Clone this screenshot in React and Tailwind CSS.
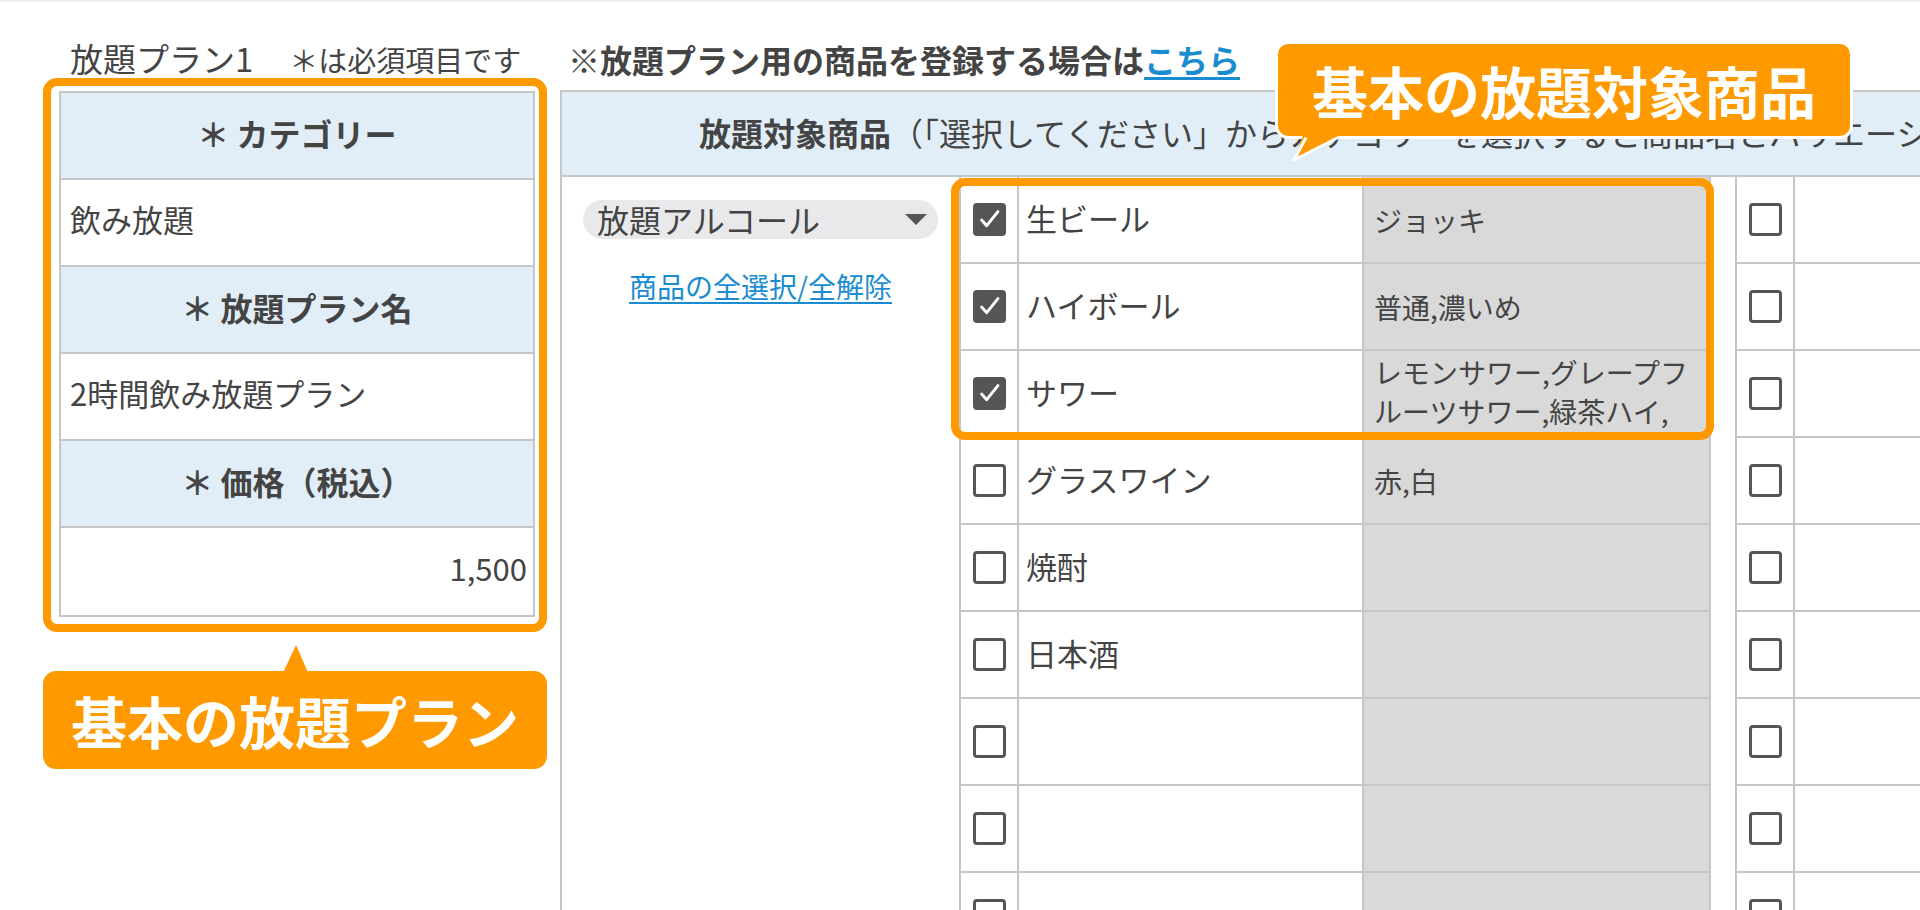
import React from 'react';

const items = [
  { checked: true, name: '生ビール', variation: ['ジョッキ'] },
  { checked: true, name: 'ハイボール', variation: ['普通,濃いめ'] },
  { checked: true, name: 'サワー', variation: ['レモンサワー,グレープフ', 'ルーツサワー,緑茶ハイ,', 'ウーロンハイ'] },
  { checked: false, name: 'グラスワイン', variation: ['赤,白'] },
  { checked: false, name: '焼酎', variation: [] },
  { checked: false, name: '日本酒', variation: [] },
  { checked: false, name: '', variation: [] },
  { checked: false, name: '', variation: [] },
  { checked: false, name: '', variation: [] },
];

function Checkbox({ checked }) {
  if (checked) {
    return (
      <span className="flex h-[33px] w-[33px] items-center justify-center rounded-[4px] bg-[#555]">
        <svg viewBox="0 0 24 24" className="h-[27px] w-[27px]" fill="none">
          <path d="M5 12.5l4.5 5L19.5 5" stroke="white" strokeWidth="2.6" strokeLinecap="round" strokeLinejoin="round" />
        </svg>
      </span>
    );
  }
  return <span className="block h-[33px] w-[33px] rounded-[4px] border-[3px] border-[#555] bg-white"></span>;
}

function PlanRow({ head, children, align = 'left' }) {
  if (head) {
    return (
      <div className="flex h-[87px] items-center justify-center border-b-2 border-[#c6c6c6] bg-[#e1eef7] pb-[6px] text-[32px] font-bold last:border-b-0">
        {children}
      </div>
    );
  }
  return (
    <div
      className={
        align === 'right'
          ? 'flex h-[87px] items-center justify-end border-b-2 border-[#c6c6c6] pb-[6px] pr-[6px] text-[31px] last:border-b-0'
          : 'flex h-[87px] items-center border-b-2 border-[#c6c6c6] pb-[6px] pl-[9px] text-[31px] last:border-b-0'
      }
    >
      {children}
    </div>
  );
}

export default function App() {
  return (
    <div className="relative h-[910px] w-[1920px] overflow-hidden border-t-2 border-[#e9eef2] bg-white font-['Noto_Sans_CJK_JP','Noto_Sans',sans-serif] text-[#444]">
      <div className="flex pl-[59px]">
        {/* Left: plan table */}
        <div className="w-[476px] shrink-0">
          <div className="flex h-[89px] items-baseline gap-[36px] whitespace-nowrap pl-[11px] pt-[32px]">
            <span className="text-[33px] leading-[48px]">放題プラン1</span>
            <span className="text-[29px]">＊は必須項目です</span>
          </div>
          <div className="border-2 border-[#c6c6c6]">
            <PlanRow head>＊ カテゴリー</PlanRow>
            <PlanRow>飲み放題</PlanRow>
            <PlanRow head>＊ 放題プラン名</PlanRow>
            <PlanRow>2時間飲み放題プラン</PlanRow>
            <PlanRow head>＊ 価格（税込）</PlanRow>
            <PlanRow align="right">1,500</PlanRow>
          </div>
        </div>

        {/* Right: target items */}
        <div className="ml-[25px] min-w-0 flex-1">
          <div className="h-[88px] whitespace-nowrap pl-[8px] pt-[33px] text-[32px] font-bold leading-[48px]">
            ※放題プラン用の商品を登録する場合は
            <a className="text-[#1a8dd0] underline underline-offset-[4px]">こちら</a>
          </div>
          <div className="border-l-2 border-t-2 border-[#c6c6c6]">
            <div className="flex h-[85px] items-center whitespace-nowrap border-b-2 border-[#c6c6c6] bg-[#e1eef7] pb-[4px] pl-[137px] text-[32px]">
              <span className="font-bold">放題対象商品</span>
              <span>（「選択してください」からカテゴリーを選択すると商品名とバリエーションが表示されます）</span>
            </div>
            <div className="flex">
              <div className="flex w-[397px] shrink-0 flex-col items-center pt-[23px]">
                <div className="flex h-[39px] w-[355px] items-center rounded-full bg-[#e9e9eb] pl-[14px] pr-[11px] text-[32px] leading-[39px]">
                  <span>放題アルコール</span>
                  <svg viewBox="0 0 22 11" className="ml-auto h-[11px] w-[22px]">
                    <polygon points="0,0 22,0 11,11" fill="#555" />
                  </svg>
                </div>
                <a className="mt-[27px] text-[28px] leading-[40px] text-[#1a8dd0] underline underline-offset-[4px]">商品の全選択/全解除</a>
              </div>

              <div className="w-[752px] shrink-0 border-x-2 border-[#c6c6c6]">
                {items.map((item, i) => (
                  <div key={i} className="flex h-[87px] border-b-2 border-[#c6c6c6]">
                    <div className="flex w-[58px] shrink-0 items-center justify-center border-r-2 border-[#c6c6c6]">
                      <Checkbox checked={item.checked} />
                    </div>
                    <div className="flex w-[345px] shrink-0 items-center border-r-2 border-[#c6c6c6] pb-[2px] pl-[7px] text-[31px]">
                      {item.name}
                    </div>
                    <div className="flex flex-1 items-start overflow-hidden bg-[#d9d9d9] pl-[10px] pt-[2px] text-[28px]">
                      <div
                        className={
                          item.variation.length > 1
                            ? 'max-h-[86px] overflow-hidden whitespace-nowrap leading-[39px]'
                            : 'whitespace-nowrap pt-[22px] leading-[39px]'
                        }
                      >
                        {item.variation.map((line, j) => (
                          <div key={j}>{line}</div>
                        ))}
                      </div>
                    </div>
                  </div>
                ))}
              </div>

              <div className="ml-[24px] flex-1 border-l-2 border-[#c6c6c6]">
                {items.map((_, i) => (
                  <div key={i} className="flex h-[87px] border-b-2 border-[#c6c6c6]">
                    <div className="flex w-[58px] shrink-0 items-center justify-center border-r-2 border-[#c6c6c6]">
                      <Checkbox checked={false} />
                    </div>
                    <div className="flex-1"></div>
                  </div>
                ))}
              </div>
            </div>
          </div>
        </div>
      </div>

      {/* Highlight frames */}
      <div className="pointer-events-none absolute left-[43px] top-[76px] h-[554px] w-[504px] rounded-[14px] border-[8px] border-[#ff9900]"></div>
      <div className="pointer-events-none absolute left-[951px] top-[176px] h-[262px] w-[763px] rounded-[14px] border-[8px] border-[#ff9900]"></div>

      {/* Callout: items */}
      <div className="absolute left-[1275px] top-[39px] flex h-[98px] w-[578px] items-center justify-center rounded-[13px] border-[3px] border-white bg-[#ff9900] text-[56px] font-bold leading-none text-white">
        基本の放題対象商品
      </div>
      <svg className="absolute left-[1288px] top-[125px] h-[40px] w-[60px]" viewBox="0 0 60 40">
        <polygon points="18,0 52,0 50,10 6,33" fill="#ff9900" />
        <polyline points="18,10.5 6,33 50,10.5" fill="none" stroke="white" strokeWidth="3" strokeLinejoin="round" />
      </svg>

      {/* Callout: plan */}
      <svg className="absolute left-[278px] top-[641px] h-[34px] w-[36px]" viewBox="0 0 36 34">
        <polygon points="3,34 32,34 18,2" fill="#ff9900" />
      </svg>
      <div className="absolute left-[43px] top-[669px] flex h-[98px] w-[504px] items-center justify-center rounded-[13px] bg-[#ff9900] text-[56px] font-bold leading-none text-white">
        基本の放題プラン
      </div>
    </div>
  );
}
